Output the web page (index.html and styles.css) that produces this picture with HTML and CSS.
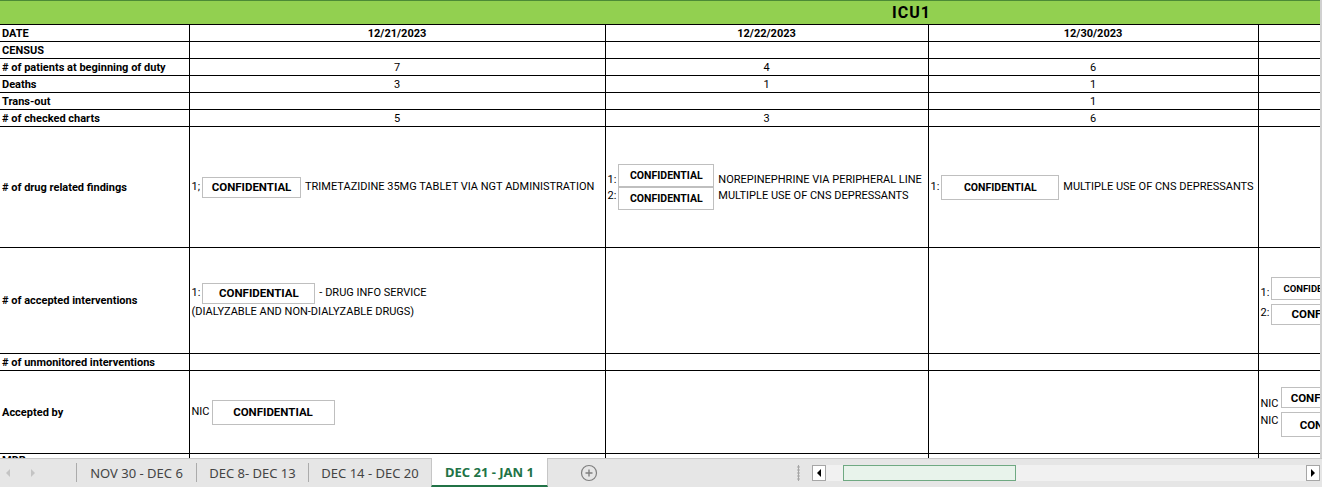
FILE: index.html
```html
<!DOCTYPE html>
<html lang="en">
<head>
    <meta charset="UTF-8">
    <title>ICU1 - DEC 21 - JAN 1</title>
    <link rel="stylesheet" href="styles.css">
</head>
<body>
    <div class="sheet">
        <table class="grid">
            <colgroup>
                <col class="col-a"><col class="col-b"><col class="col-c"><col class="col-d"><col class="col-e">
            </colgroup>
            <tr class="title-row"><td colspan="5"><span>ICU1</span></td></tr>
            <tr class="row-s"><th>DATE</th><td class="val bold">12/21/2023</td><td class="val bold">12/22/2023</td><td class="val bold">12/30/2023</td><td></td></tr>
            <tr class="row-s"><th>CENSUS</th><td></td><td></td><td></td><td></td></tr>
            <tr class="row-s"><th># of patients at beginning of duty</th><td class="val">7</td><td class="val">4</td><td class="val">6</td><td></td></tr>
            <tr class="row-s"><th>Deaths</th><td class="val">3</td><td class="val">1</td><td class="val">1</td><td></td></tr>
            <tr class="row-s"><th>Trans-out</th><td></td><td></td><td class="val">1</td><td></td></tr>
            <tr class="row-s"><th># of checked charts</th><td class="val">5</td><td class="val">3</td><td class="val">6</td><td></td></tr>

            <tr class="row-findings">
                <th># of drug related findings</th>
                <td>
                    <div class="entry">
                        <span class="idx">1;</span>
                        <span class="tbox tb-98">CONFIDENTIAL</span>
                        <span class="desc">TRIMETAZIDINE 35MG TABLET VIA NGT ADMINISTRATION</span>
                    </div>
                </td>
                <td>
                    <div class="entry-list">
                        <div class="entry low">
                            <span class="idx">1:</span>
                            <span class="tbox tb-95 small">CONFIDENTIAL</span>
                            <span class="desc">NOREPINEPHRINE VIA PERIPHERAL LINE</span>
                        </div>
                        <div class="entry high">
                            <span class="idx">2:</span>
                            <span class="tbox tb-95 small">CONFIDENTIAL</span>
                            <span class="desc">MULTIPLE USE OF CNS DEPRESSANTS</span>
                        </div>
                    </div>
                </td>
                <td>
                    <div class="entry">
                        <span class="idx">1:</span>
                        <span class="tbox tb-117 small tall">CONFIDENTIAL</span>
                        <span class="desc">MULTIPLE USE OF CNS DEPRESSANTS</span>
                    </div>
                </td>
                <td></td>
            </tr>

            <tr class="row-accepted">
                <th># of accepted interventions</th>
                <td>
                    <div class="entry-list">
                        <div class="entry">
                            <span class="idx">1:</span>
                            <span class="tbox tb-112">CONFIDENTIAL</span>
                            <span class="desc">- DRUG INFO SERVICE</span>
                        </div>
                        <div class="desc line2">(DIALYZABLE AND NON-DIALYZABLE DRUGS)</div>
                    </div>
                </td>
                <td></td>
                <td></td>
                <td>
                    <div class="entry-list gap">
                        <div class="entry low">
                            <span class="idx">1:</span>
                            <span class="tbox tb-90 tiny">CONFIDENTIAL</span>
                        </div>
                        <div class="entry high">
                            <span class="idx">2:</span>
                            <span class="tbox tb-120">CONFIDENTIAL</span>
                        </div>
                    </div>
                </td>
            </tr>

            <tr class="row-s"><th># of unmonitored interventions</th><td></td><td></td><td></td><td></td></tr>

            <tr class="row-by">
                <th>Accepted by</th>
                <td>
                    <div class="entry">
                        <span class="idx">NIC</span>
                        <span class="tbox tb-122 tall">CONFIDENTIAL</span>
                    </div>
                </td>
                <td></td>
                <td></td>
                <td>
                    <div class="entry-list gap">
                        <div class="entry low nic">
                            <span class="idx">NIC</span>
                            <span class="tbox tb-96">CONFIDENTIAL</span>
                        </div>
                        <div class="entry high">
                            <span class="idx">NIC</span>
                            <span class="tbox tb-110 tall">CONFIDENTIAL</span>
                        </div>
                    </div>
                </td>
            </tr>

            <tr class="row-mdr"><th>MDR</th><td></td><td></td><td></td><td></td></tr>
        </table>
    </div>

    <div class="tabbar">
        <div class="tab-nav">
            <svg width="8" height="10" viewBox="0 0 8 10"><path d="M6 1 L2 5 L6 9 Z" fill="#c4c4c4"/></svg>
            <svg width="8" height="10" viewBox="0 0 8 10"><path d="M2 1 L6 5 L2 9 Z" fill="#c4c4c4"/></svg>
        </div>
        <div class="tabs">
            <div class="tab w120">NOV 30 - DEC 6</div>
            <div class="tab w112">DEC 8- DEC 13</div>
            <div class="tab w123">DEC 14 - DEC 20</div>
            <div class="tab active w116">DEC 21 - JAN 1</div>
        </div>
        <div class="add-sheet">
            <svg width="18" height="18" viewBox="0 0 18 18">
                <circle cx="9" cy="9" r="7.5" fill="none" stroke="#7f7f7f" stroke-width="1.2"/>
                <path d="M9 5.5 V12.5 M5.5 9 H12.5" stroke="#7f7f7f" stroke-width="1.4"/>
            </svg>
        </div>
        <div class="split-dots"></div>
        <div class="hscroll">
            <div class="sbtn">
                <svg width="6" height="8" viewBox="0 0 6 8"><path d="M5 0 L1 4 L5 8 Z" fill="#000"/></svg>
            </div>
            <div class="track"><div class="thumb"></div></div>
            <div class="sbtn">
                <svg width="6" height="8" viewBox="0 0 6 8"><path d="M1 0 L5 4 L1 8 Z" fill="#000"/></svg>
            </div>
        </div>
    </div>
</body>
</html>
```

FILE: styles.css
```css
body {
    margin: 0;
    width: 1322px;
    height: 487px;
    overflow: hidden;
    display: flex;
    flex-direction: column;
    background: #fff;
    font-family: "Roboto", "Liberation Sans", sans-serif;
    color: #000;
}

.sheet {
    height: 458px;
    width: 1320px;
    overflow: hidden;
    border-right: 2px solid #d0d0d0;
    flex-shrink: 0;
}

.grid {
    border-collapse: collapse;
    table-layout: fixed;
    width: 1400px;
}

.col-a { width: 189px; }
.col-b { width: 416px; }
.col-c { width: 323px; }
.col-d { width: 330px; }
.col-e { width: 142px; }

.grid td, .grid th {
    border: 1px solid #000;
    padding: 0 2px;
    font-size: 11px;
    white-space: nowrap;
    overflow: hidden;
    vertical-align: middle;
}

.grid th {
    text-align: left;
    font-weight: bold;
    border-left: none;
}

.title-row td {
    background: #92d050;
    border-top: 1px solid #4c8a36;
    border-left: none;
    border-right: none;
    height: 23px;
    padding: 0 0 0 892px;
    font-size: 16px;
    font-weight: bold;
    letter-spacing: 1px;
}

.row-s td, .row-s th { height: 16px; }
.row-findings td, .row-findings th { height: 120px; }
.row-accepted td, .row-accepted th { height: 105px; }
.row-by td, .row-by th { height: 82px; }
.row-mdr td, .row-mdr th { height: 30px; vertical-align: top; }

.val { text-align: center; }
.bold { font-weight: bold; }

.entry {
    display: flex;
    align-items: center;
}

.entry.low { align-items: flex-end; }
.entry.high { align-items: flex-start; }
.entry.high .idx, .entry.high .desc { margin-top: 2px; }
.entry.nic .idx { margin-bottom: -3px; }

.entry-list {
    display: flex;
    flex-direction: column;
}

.entry-list.gap { gap: 4px; }

.idx {
    line-height: 14px;
    padding-right: 2px;
}

.desc {
    line-height: 14px;
    padding-left: 4px;
    font-size: 11px;
}

.desc.line2 { padding-left: 0; margin-top: 1px; }

.tbox {
    display: flex;
    align-items: center;
    justify-content: center;
    height: 21px;
    border: 1px solid #bfbfbf;
    background: #fff;
    font-weight: bold;
    font-size: 11.5px;
    box-sizing: border-box;
    flex-shrink: 0;
    overflow: hidden;
}

.tbox.small { font-size: 10.5px; height: 23px; }
.tbox.tiny { font-size: 9.5px; height: 23px; }
.tbox.tall { height: 25px; }

.tb-90 { width: 90px; }
.tb-95 { width: 96px; }
.tb-96 { width: 100px; }
.tb-98 { width: 99px; }
.tb-110 { width: 118px; }
.tb-112 { width: 113px; }
.tb-117 { width: 118px; }
.tb-120 { width: 120px; }
.tb-122 { width: 123px; }

.tabbar {
    height: 29px;
    flex-shrink: 0;
    display: flex;
    align-items: stretch;
    background: #e6e6e6;
    border-top: 1px solid #c6c6c6;
    box-sizing: border-box;
    font-family: "Noto Sans", "Liberation Sans", sans-serif;
}

.tab-nav {
    width: 76px;
    display: flex;
    align-items: center;
    gap: 17px;
    padding-left: 4px;
    box-sizing: border-box;
}

.tabs {
    display: flex;
    align-items: stretch;
}

.tab {
    display: flex;
    align-items: center;
    justify-content: center;
    font-size: 13px;
    color: #444;
    border-left: 1px solid #ababab;
    margin: 4px 0 5px;
    box-sizing: border-box;
}

.tab.active {
    margin: -1px 0 0;
    background: #fff;
    color: #217346;
    font-weight: bold;
    border-left: 1px solid #c6c6c6;
    border-right: 1px solid #c6c6c6;
    border-bottom: 2px solid #217346;
}

.w120 { width: 120px; }
.w112 { width: 112px; }
.w123 { width: 123px; }
.w116 { width: 117px; }

.add-sheet {
    display: flex;
    align-items: center;
    margin-left: 32px;
}

.split-dots {
    flex: 1;
    margin: 6px 12px 6px 0;
    background: radial-gradient(circle, #a6a6a6 1px, transparent 1.3px) right center / 3px 3px repeat-y;
}

.hscroll {
    width: 508px;
    margin-right: 2px;
    display: flex;
    align-items: center;
}

.sbtn {
    width: 14px;
    height: 16px;
    box-sizing: border-box;
    border: 1px solid #a6a6a6;
    background: #fff;
    display: flex;
    align-items: center;
    justify-content: center;
}

.track {
    flex: 1;
    height: 16px;
    background: #f1f1f1;
    padding-left: 17px;
    box-sizing: border-box;
    display: flex;
    align-items: center;
}

.thumb {
    width: 173px;
    height: 16px;
    box-sizing: border-box;
    background: #e8f3eb;
    border: 1px solid #6fa982;
}
```
